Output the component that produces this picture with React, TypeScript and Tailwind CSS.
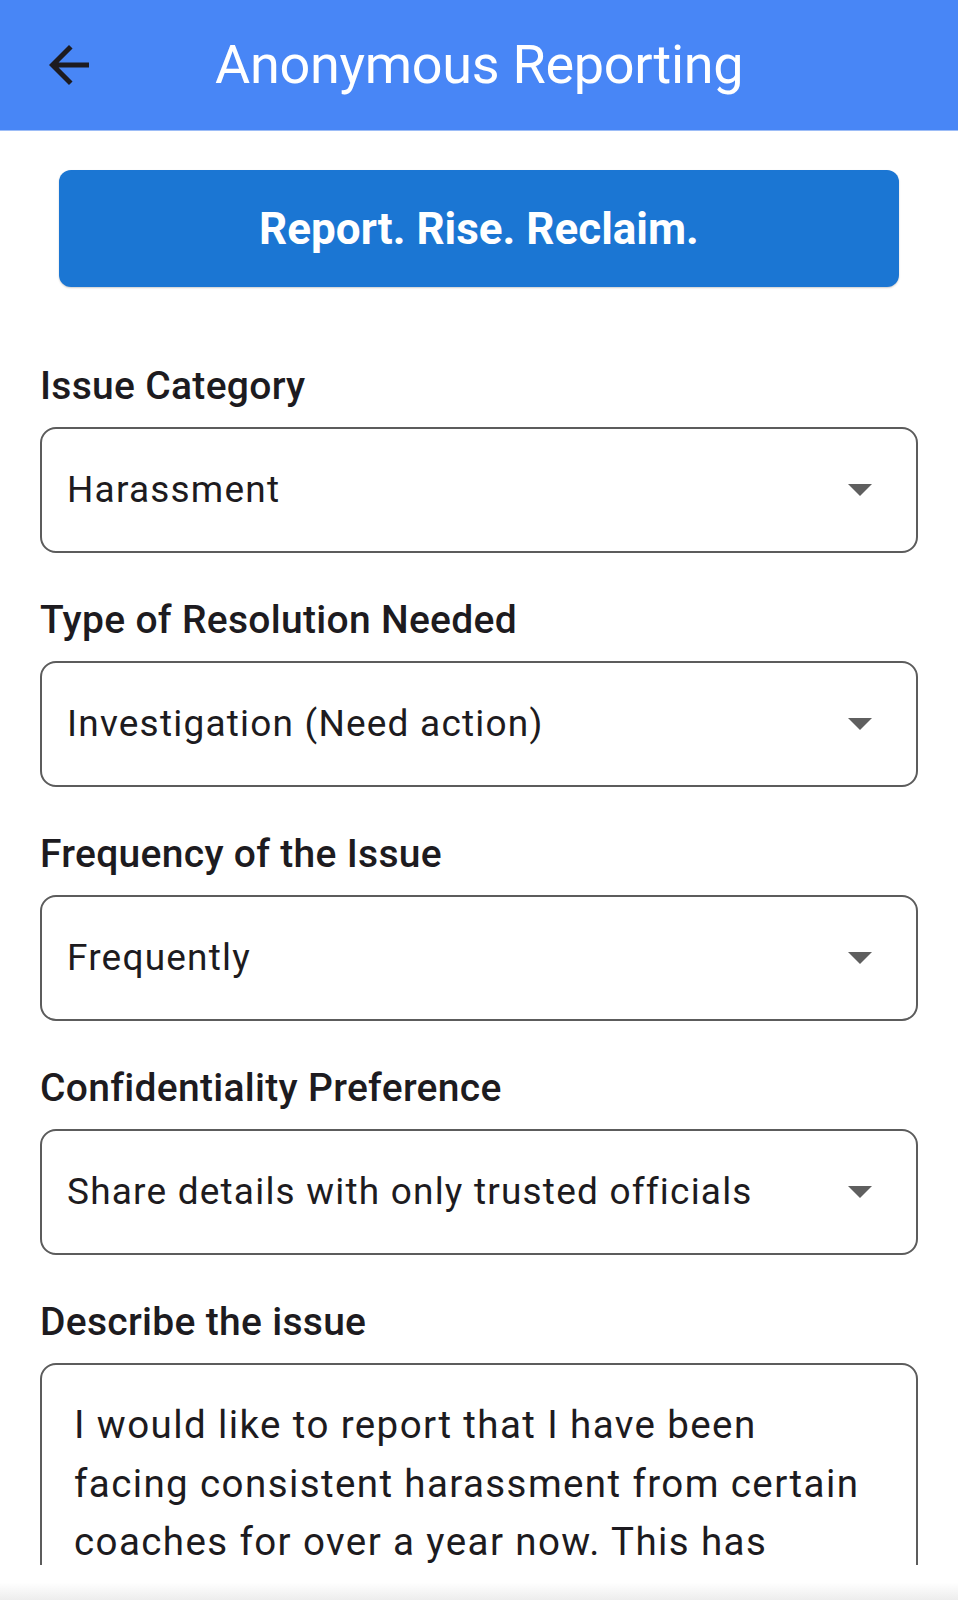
const fields = [
  { label: "Issue Category", value: "Harassment" },
  { label: "Type of Resolution Needed", value: "Investigation (Need action)" },
  { label: "Frequency of the Issue", value: "Frequently" },
  { label: "Confidentiality Preference", value: "Share details with only trusted officials" },
];

const issueLines = [
  "I would like to report that I have been",
  "facing consistent harassment from certain",
  "coaches for over a year now. This has",
  "affected my performance and my mental",
  "health.",
];

function BackArrow() {
  return (
    <svg viewBox="0 0 24 24" className="w-[60px] h-[60px]" fill="#1d1b20">
      <path d="M20 11H7.83l5.59-5.59L12 4l-8 8 8 8 1.41-1.41L7.83 13H20v-2z" />
    </svg>
  );
}

function DropArrow() {
  return (
    <svg viewBox="0 0 24 12" className="w-[24px] h-[12px]" fill="#5f5f5f">
      <path d="M0 0h24L12 12z" />
    </svg>
  );
}

function SelectField({ label, value }: { label: string; value: string }) {
  return (
    <div className="flex flex-col">
      <div className="h-[40px] text-[39px] leading-[40px] font-medium tracking-[0.3px] text-[#1d1b20]">
        {label}
      </div>
      <div className="mt-[21px] h-[126px] flex items-center justify-between rounded-[16px] border-2 border-[#5c5c5c] pl-[25px] pr-[44px]">
        <span className="text-[37px] leading-[44px] tracking-[1.2px] text-[#1d1b20]">{value}</span>
        <DropArrow />
      </div>
    </div>
  );
}

export default function App() {
  return (
    <div className="w-[958px] h-[1600px] overflow-hidden bg-white font-['Roboto',sans-serif]">
      <header className="h-[131px] bg-[#4886f6] flex items-center pl-[39px] border-b border-[#9dbdf7]">
        <BackArrow />
        <h1 className="ml-[116px] text-[54px] leading-none tracking-[-0.3px] text-white font-normal">
          Anonymous Reporting
        </h1>
      </header>

      <main className="h-[1434px] overflow-hidden pt-[39px]">
        <div className="mx-[59px] h-[117px] rounded-[12px] bg-[#1b76d3] shadow-[0_1px_2px_rgba(0,0,0,0.2)] flex items-center justify-center">
          <span className="text-[44px] font-bold text-white">Report. Rise. Reclaim.</span>
        </div>

        <div className="mx-[40px] mt-[79px] flex flex-col gap-[47px]">
          {fields.map((f, i) => (
            <SelectField key={i} label={f.label} value={f.value} />
          ))}

          <div className="flex flex-col">
            <div className="h-[40px] text-[39px] leading-[40px] font-medium tracking-[0.3px] text-[#1d1b20]">
              Describe the issue
            </div>
            <div className="mt-[21px] h-[400px] rounded-[16px] border-2 border-[#5c5c5c] pl-[32px] pr-[20px] pt-[31px]">
              {issueLines.map((line, i) => (
                <p key={i} className="text-[38.5px] leading-[58.5px] tracking-[1.4px] text-[#1d1b20] whitespace-nowrap">
                  {line}
                </p>
              ))}
            </div>
          </div>
        </div>
      </main>

      <footer className="h-[35px] bg-gradient-to-b from-white via-white to-[#ededed]" />
    </div>
  );
}
